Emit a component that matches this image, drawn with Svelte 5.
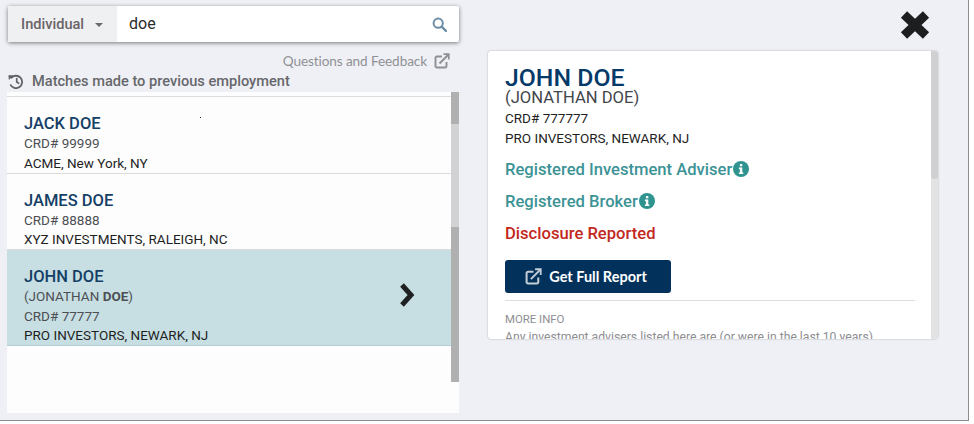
<script>
	const matches = [
		{ name: 'JACK DOE', crd: '99999', firm: 'ACME, New York, NY', speck: true },
		{ name: 'JAMES DOE', crd: '88888', firm: 'XYZ INVESTMENTS, RALEIGH, NC' },
		{ name: 'JOHN DOE', alias: 'JONATHAN', crd: '77777', firm: 'PRO INVESTORS, NEWARK, NJ', selected: true }
	]
</script>

{#snippet linkIcon(size)}
	<svg width={size} height={size} viewBox="0 0 16 16" fill="none" stroke="currentColor" stroke-width="1.9">
		<path d="M12.5 9v4.2a1.3 1.3 0 0 1-1.3 1.3H2.8a1.3 1.3 0 0 1-1.3-1.3V4.8a1.3 1.3 0 0 1 1.3-1.3H8" />
		<path d="M5.5 10.5L14 2" />
		<path d="M9.5 1.2h5.3v5.3" stroke-width="1.7" />
	</svg>
{/snippet}

{#snippet infoIcon()}
	<svg class="info" width="16" height="16" viewBox="0 0 16 16">
		<circle cx="8" cy="8" r="8" fill="#2f9490" />
		<rect x="6.9" y="3" width="2.4" height="2.3" fill="#fff" />
		<path d="M5.9 6.6h3.4v4.9h1v1.6H5.9v-1.6h1V8.200h-1z" fill="#fff" />
	</svg>
{/snippet}

<main class="frame">
	<section class="left">
		<div class="search">
			<div class="type">
				<span>Individual</span>
				<i class="caret"></i>
			</div>
			<div class="query">
				<span>doe</span>
				<svg width="15" height="15" viewBox="0 0 15 15" fill="none" stroke="#6f8ea6">
					<circle cx="6.200" cy="6.200" r="4.600" stroke-width="2" />
					<path d="M9.700 9.700l4.200 4.200" stroke-width="2.400" stroke-linecap="round" />
				</svg>
			</div>
		</div>

		<a class="feedback" href="#top">
			Questions and Feedback
			{@render linkIcon(16)}
		</a>

		<h2 class="history">
			<svg width="16" height="15" viewBox="0 0 16 15" fill="none" stroke="#5f6165">
				<path d="M3 4.200A6.200 6.200 0 1 1 2.300 10.500" stroke-width="1.800" />
				<path d="M0.400 1.300h5.200L0.900 6z" fill="#5f6165" stroke="none" />
				<path d="M8.700 4v4l2.600 1.700" stroke-width="1.600" />
			</svg>
			Matches made to previous employment
		</h2>

		<div class="results">
			<ul>
				{#each matches as m}
					<li class:selected={m.selected}>
						<h3>{m.name}</h3>
						{#if m.alias}
							<p class="muted">({m.alias} <b>DOE</b>)</p>
						{/if}
						<p class="muted">CRD# {m.crd}</p>
						<p>{m.firm}</p>
						{#if m.speck}
							<i class="speck"></i>
						{/if}
						{#if m.selected}
							<svg class="chevron" width="16" height="26" viewBox="0 0 16 26" fill="none" stroke="#1f2022" stroke-width="5">
								<path d="M3 3l9 10-9 10" />
							</svg>
						{/if}
					</li>
				{/each}
			</ul>
			<div class="bar">
				<span class="dark top"></span>
				<span class="light"></span>
				<span class="dark long"></span>
			</div>
		</div>
	</section>

	<section class="right">
		<button class="close" aria-label="Close">
			<svg width="32" height="30" viewBox="0 0 32 30" fill="none" stroke="#1d1e20" stroke-width="9" stroke-linejoin="round">
				<path d="M5 4.500l22 21M27 4.500l-22 21" />
			</svg>
		</button>

		<article class="card">
			<div class="body">
				<h1>JOHN DOE</h1>
				<p class="alias">(JONATHAN DOE)</p>
				<p class="small crd">CRD# 777777</p>
				<p class="small">PRO INVESTORS, NEWARK, NJ</p>
				<p class="status ok first">Registered Investment Adviser{@render infoIcon()}</p>
				<p class="status ok">Registered Broker{@render infoIcon()}</p>
				<p class="status bad">Disclosure Reported</p>
				<button class="report">
					{@render linkIcon(17)}
					Get Full Report
				</button>
				<hr />
				<p class="more">MORE INFO</p>
				<p class="more-text">Any investment advisers listed here are (or were in the last 10 years)</p>
			</div>
			<div class="bar card-bar">
				<span class="thumb"></span>
			</div>
		</article>
	</section>
</main>

<style>
	:global(body) {
		margin: 0;
		background: #fff;
		font-family: Roboto, "Liberation Sans", sans-serif;
	}

	.frame {
		width: 969px;
		height: 421px;
		box-sizing: border-box;
		display: flex;
		background: #eff0f5;
		border-right: 1px solid #8c8c8c;
		border-bottom: 1px solid #8c8c8c;
	}

	.left {
		width: 452px;
		margin-left: 7px;
		padding-top: 6px;
		display: flex;
		flex-direction: column;
	}

	.search {
		display: flex;
		height: 36px;
		margin-left: 1px;
		background: #fff;
		border-radius: 2px;
		box-shadow: 0 1px 4px rgba(0, 0, 0, 0.5);
	}

	.type {
		width: 109px;
		box-sizing: border-box;
		padding-left: 13px;
		display: flex;
		align-items: center;
		background: #eff0f2;
		color: #6a6468;
		font: 500 14.6px Roboto, sans-serif;
	}

	.caret {
		margin: 2px 0 0 11px;
		border: 4px solid transparent;
		border-top-color: #6a6a6e;
		border-bottom: 0;
	}

	.query {
		flex: 1;
		padding: 0 12px 2px;
		display: flex;
		align-items: center;
		justify-content: space-between;
		font-size: 16px;
		color: #2b2b2b;
	}

	.query svg {
		margin-top: 2px;
	}

	.feedback {
		margin: 10px 9px 0 0;
		height: 18px;
		display: flex;
		align-items: center;
		justify-content: flex-end;
		gap: 7px;
		color: #8f9094;
		font: 400 13.6px Lato, sans-serif;
		letter-spacing: -0.1px;
		text-decoration: none;
	}

	.history {
		margin: 2px 0 0 1px;
		height: 18px;
		display: flex;
		align-items: center;
		gap: 8px;
		color: #66676b;
		font: 500 14.6px Roboto, sans-serif;
	}

	.results {
		margin-top: 2px;
		height: 321px;
		display: flex;
		background: #fdfdfe;
	}

	ul {
		flex: 1;
		margin: 4px 0 0;
		padding: 0;
		list-style: none;
		border-top: 1px solid #dcdcdc;
	}

	li {
		position: relative;
		height: 76.5px;
		box-sizing: border-box;
		padding: 17px 17px 0;
		overflow: hidden;
		border-bottom: 1px solid #dcdcdc;
	}

	li.selected {
		height: 96px;
		background: #c7dfe3;
		border-bottom-color: #b2ccd1;
	}

	h3 {
		margin: 0;
		font-size: 16.5px;
		line-height: 20px;
		font-weight: 500;
		color: #153f66;
	}

	li p {
		margin: 0;
		font-size: 13.5px;
		line-height: 19.5px;
		color: #1f1f1f;
	}

	li p.muted {
		color: #4d4f53;
	}

	li b {
		font-weight: 700;
	}

	.speck {
		position: absolute;
		left: 193px;
		top: 20px;
		width: 1px;
		height: 1px;
		background: #222;
	}

	.chevron {
		position: absolute;
		right: 36px;
		top: 32px;
	}

	.bar {
		width: 8px;
		display: flex;
		flex-direction: column;
		background: #d2d2d4;
	}

	.bar span {
		display: block;
	}

	.dark {
		background: #b0b0b0;
	}

	.top {
		height: 32px;
	}

	.light {
		height: 103px;
	}

	.long {
		height: 155px;
	}

	.results .bar {
		height: 290px;
	}

	.right {
		width: 450px;
		margin-left: 29px;
		display: flex;
		flex-direction: column;
		align-items: flex-end;
	}

	.close {
		width: 32px;
		height: 30px;
		margin: 10px 7px 0 0;
		padding: 0;
		border: 0;
		background: none;
		display: block;
	}

	.card {
		width: 100%;
		height: 288px;
		margin-top: 11px;
		display: flex;
		overflow: hidden;
		background: #fff;
		border-radius: 3px;
		box-shadow: 0 0 2px rgba(0, 0, 0, 0.3);
	}

	.body {
		flex: 1;
		padding: 16px 16px 0 17px;
		overflow: hidden;
	}

	h1 {
		margin: 0;
		font-size: 24.8px;
		line-height: 21px;
		font-weight: 500;
		color: #053a68;
	}

	.alias {
		margin: 0;
		font-size: 16.6px;
		line-height: 19px;
		color: #43464b;
	}

	.small {
		margin: 0;
		font-size: 13.5px;
		line-height: 20px;
		color: #1f1f1f;
	}

	.crd {
		margin-top: 1px;
	}

	.status {
		margin: 0;
		height: 32px;
		display: flex;
		align-items: center;
		font-size: 16.6px;
		font-weight: 500;
	}

	.first {
		margin-top: 5px;
	}

	.ok {
		color: #3c9396;
	}

	.bad {
		color: #c2281e;
	}

	.info {
		margin-left: 1px;
	}

	.report {
		margin-top: 11px;
		width: 166px;
		height: 33px;
		box-sizing: border-box;
		padding: 0 4px 0 0;
		display: flex;
		align-items: center;
		justify-content: center;
		gap: 7px;
		border: 0;
		border-radius: 3px;
		background: #02325b;
		color: #fff;
		font: 700 14.5px Lato, sans-serif;
	}

	.report svg {
		color: #c5ced8;
	}

	hr {
		margin: 7px 0 0;
		border: 0;
		border-top: 1px solid #dedede;
	}

	.more {
		margin: 11px 0 0;
		font-size: 11.4px;
		line-height: 14px;
		color: #8e8e92;
	}

	.more-text {
		margin: 3px 0 0;
		font-size: 12.2px;
		line-height: 16px;
		white-space: nowrap;
		color: #8e8e92;
	}

	.card-bar {
		width: 7px;
		background: #e3e3e4;
	}

	.thumb {
		height: 128px;
		background: #d0d0d2;
		border-radius: 0 0 3px 3px;
	}
</style>
